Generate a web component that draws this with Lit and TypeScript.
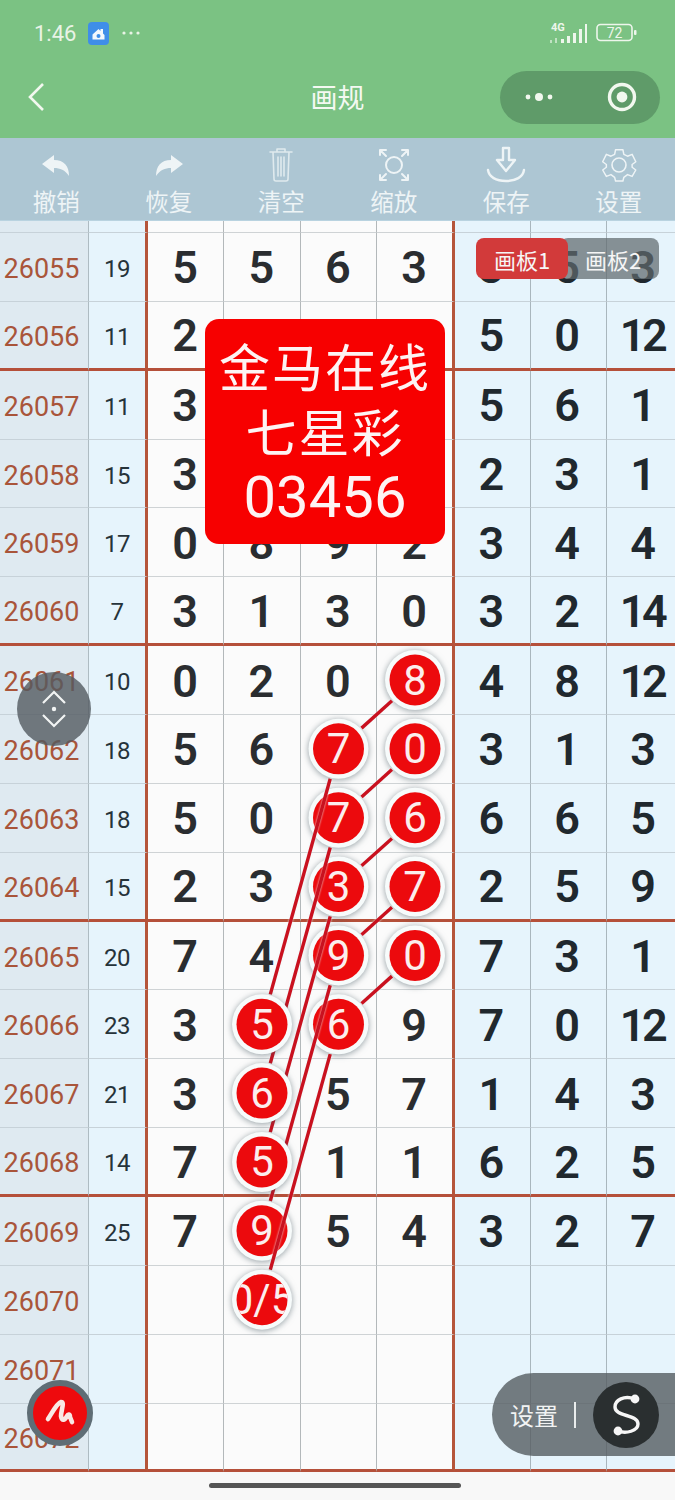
import { LitElement, html, css, svg } from "lit";
import { customElement } from "lit/decorators.js";

const ROWS: [string, string, string[]][] = [
  ["26055", "19", ["5", "5", "6", "3", "3", "5", "3"]],
  ["26056", "11", ["2", "", "", "", "5", "0", "12"]],
  ["26057", "11", ["3", "", "", "", "5", "6", "1"]],
  ["26058", "15", ["3", "", "", "", "2", "3", "1"]],
  ["26059", "17", ["0", "8", "9", "2", "3", "4", "4"]],
  ["26060", "7", ["3", "1", "3", "0", "3", "2", "14"]],
  ["26061", "10", ["0", "2", "0", "", "4", "8", "12"]],
  ["26062", "18", ["5", "6", "", "", "3", "1", "3"]],
  ["26063", "18", ["5", "0", "", "", "6", "6", "5"]],
  ["26064", "15", ["2", "3", "", "", "2", "5", "9"]],
  ["26065", "20", ["7", "4", "", "", "7", "3", "1"]],
  ["26066", "23", ["3", "", "", "9", "7", "0", "12"]],
  ["26067", "21", ["3", "", "5", "7", "1", "4", "3"]],
  ["26068", "14", ["7", "", "1", "1", "6", "2", "5"]],
  ["26069", "25", ["7", "", "5", "4", "3", "2", "7"]],
  ["26070", "", ["", "", "", "", "", "", ""]],
  ["26071", "", ["", "", "", "", "", "", ""]],
  ["26072", "", ["", "", "", "", "", "", ""]],
];

type Ball = [number, number, string];
const CX = [262, 338.5, 415];
const RY = (i: number) => 680 + i * 68.85;
const ball = (c: number, r: number, t: string): Ball => [CX[c], RY(r), t];

function seg(a: Ball, b: Ball) {
  const dx = b[0] - a[0], dy = b[1] - a[1];
  const d = Math.hypot(dx, dy);
  const s = 31 / d;
  return svg`<line class="ln" x1=${a[0] + dx * s} y1=${a[1] + dy * s} x2=${b[0] - dx * s} y2=${b[1] - dy * s}></line>`;
}
function disc(b: Ball) {
  return svg`<circle class="ring" cx=${b[0]} cy=${b[1]} r="30"></circle><circle class="fill" cx=${b[0]} cy=${b[1]} r="25.5"></circle>`;
}
function label(b: Ball) {
  return svg`<text class="num" clip-path=${b[2].length > 1 ? "url(#clip05)" : ""} x=${b[0]} y=${b[1] + 14.5}>${b[2]}</text>`;
}

const right = [ball(2, 0, "8"), ball(2, 1, "0"), ball(2, 2, "6"), ball(2, 3, "7"), ball(2, 4, "0")];
const mid = [ball(1, 1, "7"), ball(1, 2, "7"), ball(1, 3, "3"), ball(1, 4, "9"), ball(1, 5, "6")];
const left = [ball(0, 5, "5"), ball(0, 6, "6"), ball(0, 7, "5"), ball(0, 8, "9"), ball(0, 9, "0/5")];

@customElement("app-root")
export class AppRoot extends LitElement {
  static styles = css`
    :host { display: block; width: 675px; height: 1500px; overflow: hidden; background: #f8f8f8;
      font-family: "Noto Sans CJK SC", "Noto Sans", sans-serif; }
    .head { background: #7bc283; height: 138px; display: flex; flex-direction: column; color: #f2f8ef; }
    .status { height: 66px; padding: 0 37px 0 34px; display: flex; align-items: center; gap: 10px; box-sizing: border-box; }
    .time { font: 400 22px Roboto, sans-serif; color: #e9f3e6; width: 44px; }
    .sp { flex: 1; }
    .nav { height: 72px; display: flex; align-items: center; position: relative; padding: 0 15px 0 26px; justify-content: space-between; box-sizing: border-box; padding-bottom: 10px; }
    .title { position: absolute; left: 0; right: 0; text-align: center; font-size: 27px; line-height: 36px; color: #f4f9f2; }
    .capsule { width: 160px; height: 53px; border-radius: 27px; background: #5f9b69; display: flex; align-items: center; justify-content: space-between; padding: 0 23px 0 23px; box-sizing: border-box; }
    .tools { height: 83px; background: #adc6d3; display: grid; grid-template-columns: repeat(6, 112.5px); box-shadow: inset 0 -1px 0 #b9d3e0; }
    .tool { display: flex; flex-direction: column; align-items: center; padding-top: 8px; color: #eef4f6; }
    .tool svg { height: 38px; width: 44px; display: block; }
    .tool span { font-size: 23.5px; line-height: 32px; margin-top: 1px; }
    .sheet { position: relative; height: 1251px; overflow: hidden; background: #fbfbfb; }
    .grid { display: grid; grid-template-columns: 89px 59px 76px 76.5px 76.5px 78px 75.5px 76px 76px; grid-template-rows: 12px repeat(18, 68.86px); }
    .c { box-sizing: border-box; border-right: 1.5px solid #b3b8ba; border-bottom: 1.5px solid #cfd3d5; display: flex; align-items: center; justify-content: center; min-width: 0; overflow: hidden; padding-top: 4px; }
    .c.a { background: #dfeaf1; color: #a9553a; font: 400 27px Roboto, sans-serif; border-bottom-color: #c7d2d9; border-right-color: #aebbc2; padding-right: 5px; }
    .c.b { background: #e6f4fc; color: #26333a; font: 400 24px Roboto, sans-serif; letter-spacing: -0.6px; border-bottom-color: #c7d2d9; border-right: 3px solid #b5553a; }
    .c.m { background: #fbfbfb; color: #2a2d30; font: 600 45px Roboto, sans-serif; padding-right: 1px; padding-top: 2px; }
    .c.m.e { border-right: 3px solid #b5553a; }
    .c.r { background: #e6f4fc; color: #20282e; font: 600 45px Roboto, sans-serif; border-bottom-color: #c7d2d9; border-right-color: #a9b6bd; padding-right: 2px; padding-top: 2px; }
    .c.t { letter-spacing: -3.5px; padding-right: 4px; }
    .c.h { border-bottom: 3px solid #b5503a; }
    .over { position: absolute; left: 0; top: 0; width: 675px; height: 1251px; pointer-events: none; }
    .ln { stroke: #c9111f; stroke-width: 3.4; filter: drop-shadow(0 0 1px rgba(235, 250, 250, .9)); }
    .ring { fill: #f7fbfb; filter: drop-shadow(0 1px 3px rgba(60, 80, 90, .55)); }
    .fill { fill: #ec0a0d; }
    .num { fill: #fbeeee; font: 400 42px Roboto, sans-serif; text-anchor: middle; }
    .popup { position: absolute; left: 205px; top: 98px; width: 240px; height: 225px; box-sizing: border-box; border-radius: 14px; background: #f70000; color: #fdf3f3; text-align: center; font-size: 51px; padding-top: 14px; letter-spacing: 2px; }
    .popup div { height: 65px; line-height: 65px; }
    .popup .digits { font: 400 58px/69px Roboto, sans-serif; letter-spacing: 0; }
    .tabs { position: absolute; left: 476px; top: 17px; width: 183px; height: 41px; display: flex; font-size: 22px; color: #f6f6f6; }
    .tabs div { display: flex; align-items: center; justify-content: center; border-radius: 8px; }
    .tab1 { width: 92px; background: #d23a3a; position: relative; z-index: 1; }
    .tab2 { flex: 1; margin-left: -8px; padding-left: 7px; background: rgba(96, 105, 110, .72); }
    .updown { position: absolute; left: 17px; top: 451px; width: 74px; height: 74px; border-radius: 50%; background: rgba(82, 90, 96, .8); display: flex; align-items: center; justify-content: center; }
    .pen { position: absolute; left: 27px; top: 1159px; width: 66px; height: 66px; box-sizing: border-box; border-radius: 50%; background: #ee0a0d; border: 6px solid #5f6d75; display: flex; align-items: center; justify-content: center; }
    .pill { position: absolute; right: 0; top: 1152px; width: 183px; height: 83px; border-radius: 41.5px 0 0 41.5px; background: rgba(85, 92, 96, .8); display: flex; align-items: center; box-sizing: border-box; padding-left: 18px; color: #f1f3f3; font-size: 24px; }
    .pill i { width: 2px; height: 26px; background: #e9ecec; margin: 0 17px 0 16px; }
    .logo { width: 66px; height: 66px; border-radius: 50%; background: #2a2f30; display: flex; align-items: center; justify-content: center; }
    .foot { height: 28px; display: flex; justify-content: center; padding: 11px 6px 0 0; box-sizing: border-box; }
    .bar { width: 252px; height: 5px; border-radius: 3px; background: #555; }
  `;

  private cell(cls: string, v: string) {
    return html`<div class="c ${cls}">${v}</div>`;
  }

  private tool(name: string, icon: unknown) {
    return html`<div class="tool">${icon}<span>${name}</span></div>`;
  }

  render() {
    const ic = "fill:none;stroke:#eef4f6;stroke-width:2;stroke-linecap:round;stroke-linejoin:round";
    return html`
      <div class="head">
        <div class="status">
          <span class="time">1:46</span>
          <svg width="21" height="23" viewBox="0 0 21 23"><rect width="21" height="23" rx="4" fill="#3f8ee8"/><path d="M4.5 12.5L10.5 7l2 2V7h2.5v4.5l1.5 1.5v4.5h-12z" fill="#f3f8fd"/><circle cx="10.5" cy="14" r="2" fill="#3f8ee8"/></svg>
          <svg width="22" height="6" viewBox="0 0 22 6" style="margin-left:1px"><circle cx="4" cy="3" r="1.6" fill="#e9f3e6"/><circle cx="11" cy="3" r="1.6" fill="#e9f3e6"/><circle cx="18" cy="3" r="1.6" fill="#e9f3e6"/></svg>
          <div class="sp"></div>
          <svg width="40" height="24" viewBox="0 0 40 24"><text x="3" y="10" font-family="Roboto" font-weight="700" font-size="11" fill="#eef6ec">4G</text><g fill="#eef6ec"><rect x="2" y="19" width="2" height="3" opacity=".6"/><rect x="7" y="17" width="2" height="5" opacity=".6"/><rect x="13" y="18" width="3" height="4"/><rect x="19" y="15" width="3" height="7"/><rect x="25" y="12" width="3" height="10"/><rect x="31" y="8" width="3" height="14"/><rect x="37" y="3" width="2" height="19"/></g></svg>
          <svg width="42" height="20" viewBox="0 0 42 20" style="margin-left:-2px"><rect x="1" y="1.5" width="35" height="16" rx="3.5" fill="none" stroke="#eef6ec" stroke-width="1.6"/><rect x="38" y="7" width="2.5" height="5" rx="1" fill="#eef6ec"/><text x="18.5" y="15" text-anchor="middle" font-family="Roboto" font-size="14" fill="#eef6ec">72</text></svg>
        </div>
        <div class="nav">
          <div class="title">画规</div>
          <svg width="20" height="30" viewBox="0 0 20 30"><path d="M17 2L4 15l13 13" fill="none" stroke="#f2f8ef" stroke-width="2.6"/></svg>
          <div class="capsule">
            <svg width="32" height="12" viewBox="0 0 32 12"><circle cx="5" cy="6" r="2.4" fill="#f2f8ef"/><circle cx="16" cy="6" r="4" fill="#f2f8ef"/><circle cx="27" cy="6" r="2.4" fill="#f2f8ef"/></svg>
            <svg width="30" height="30" viewBox="0 0 30 30"><circle cx="15" cy="15" r="12.5" fill="none" stroke="#f2f8ef" stroke-width="3.4"/><circle cx="15" cy="15" r="5.4" fill="#f2f8ef"/></svg>
          </div>
        </div>
      </div>
      <div class="tools">
        ${this.tool("撤销", html`<svg viewBox="0 0 44 38"><path d="M20 9L8 18l12 9v-5c6 0 11 2 15 8 0-10-5-16-15-16z" fill="#eef4f6"/></svg>`)}
        ${this.tool("恢复", html`<svg viewBox="0 0 44 38"><path d="M24 9l12 9-12 9v-5c-6 0-11 2-15 8 0-10 5-16 15-16z" fill="#eef4f6"/></svg>`)}
        ${this.tool("清空", html`<svg viewBox="0 0 44 38" style="${ic};stroke:#dfeaee;stroke-width:1.6"><path d="M11 6h22M18 6V3h8v3M14 6l1 27c0 1 1 2 2 2h10c1 0 2-1 2-2l1-27M19 11v19M22 11v19M25 11v19"/></svg>`)}
        ${this.tool("缩放", html`<svg viewBox="0 0 44 38" style="${ic}"><circle cx="22" cy="19" r="8"/><path d="M8 9V4h6M8 4l6 6M36 9V4h-6M36 4l-6 6M8 29v5h6M8 34l6-6M36 29v5h-6M36 34l-6-6"/></svg>`)}
        ${this.tool("保存", html`<svg viewBox="0 0 44 38" style="${ic};stroke-width:2.4"><path d="M19 2h6v12h6l-9 11-9-11h6zM4 24c1 7 8 11 18 11s17-4 18-11"/></svg>`)}
        ${this.tool("设置", html`<svg viewBox="0 0 44 38" style="${ic};stroke-width:1.6"><path d="M18 3h8l1 5 4 2 5-2 4 8-4 3v3l4 3-4 7-5-2-4 3-1 4h-8l-1-4-4-3-5 2-4-7 4-3v-3l-4-3 4-8 5 2 4-2z" transform="translate(2 1) scale(.92)"/><circle cx="22" cy="19" r="7"/></svg>`)}
      </div>
      <div class="sheet">
        <div class="grid">
          ${this.cell("a", "")}${this.cell("b", "")}
          ${[0, 1, 2, 3].map((i) => this.cell(i === 3 ? "m e" : "m", ""))}
          ${[0, 1, 2].map(() => this.cell("r", ""))}
          ${ROWS.map((row, i) => {
            const h = (i - 1) % 4 === 0 ? " h" : "";
            return html`
              ${this.cell("a" + h, row[0])}${this.cell("b" + h, row[1])}
              ${row[2].map((v, j) => {
                const base = j < 4 ? (j === 3 ? "m e" : "m") : "r";
                return this.cell(base + h + (v.length > 1 ? " t" : ""), v);
              })}
            `;
          })}
        </div>
        <svg class="over" viewBox="0 221 675 1251">
          <defs><clipPath id="clip05"><circle cx=${left[4][0]} cy=${left[4][1]} r="25.5"></circle></clipPath></defs>
          ${right.map(disc)}${mid.map(disc)}
          ${right.map((b, i) => seg(b, mid[i]))}
          ${mid.slice(0, 4).map((b, i) => seg(b, left[i]))}
          ${left.slice(0, 4).map(disc)}
          ${seg(mid[4], left[4])}
          ${disc(left[4])}
          ${[...right, ...mid, ...left].map(label)}
        </svg>
        <div class="popup"><div>金马在线</div><div>七星彩</div><div class="digits">03456</div></div>
        <div class="tabs"><div class="tab1">画板1</div><div class="tab2">画板2</div></div>
        <div class="updown">
          <svg width="34" height="50" viewBox="0 0 34 50"><path d="M6 19L17 8l11 11M6 31l11 11 11-11" fill="none" stroke="#f2f4f4" stroke-width="2.2"/><circle cx="17" cy="25" r="2.2" fill="#f2f4f4"/></svg>
        </div>
        <div class="pen">
          <svg width="36" height="34" viewBox="0 0 36 34"><path d="M6 23C10 17 15 7 19 6c4 0 0 8 0 14 1 6 4 4 6 0 1-2 3-2 3 1l2 5" fill="none" stroke="#f9e9e4" stroke-width="4.6" stroke-linecap="round" stroke-linejoin="round"/></svg>
        </div>
        <div class="pill">
          <span>设置</span><i></i>
          <div class="logo">
            <svg width="36" height="44" viewBox="0 0 36 44"><path d="M27 6C16 2 7 7 7 14c0 10 23 7 23 17 0 7-12 10-20 7" fill="none" stroke="#f6f6f6" stroke-width="3.4"/><circle cx="27" cy="6" r="4.4" fill="#f6f6f6"/><circle cx="10" cy="38" r="4.4" fill="#f6f6f6"/></svg>
          </div>
        </div>
      </div>
      <div class="foot"><div class="bar"></div></div>
    `;
  }
}
